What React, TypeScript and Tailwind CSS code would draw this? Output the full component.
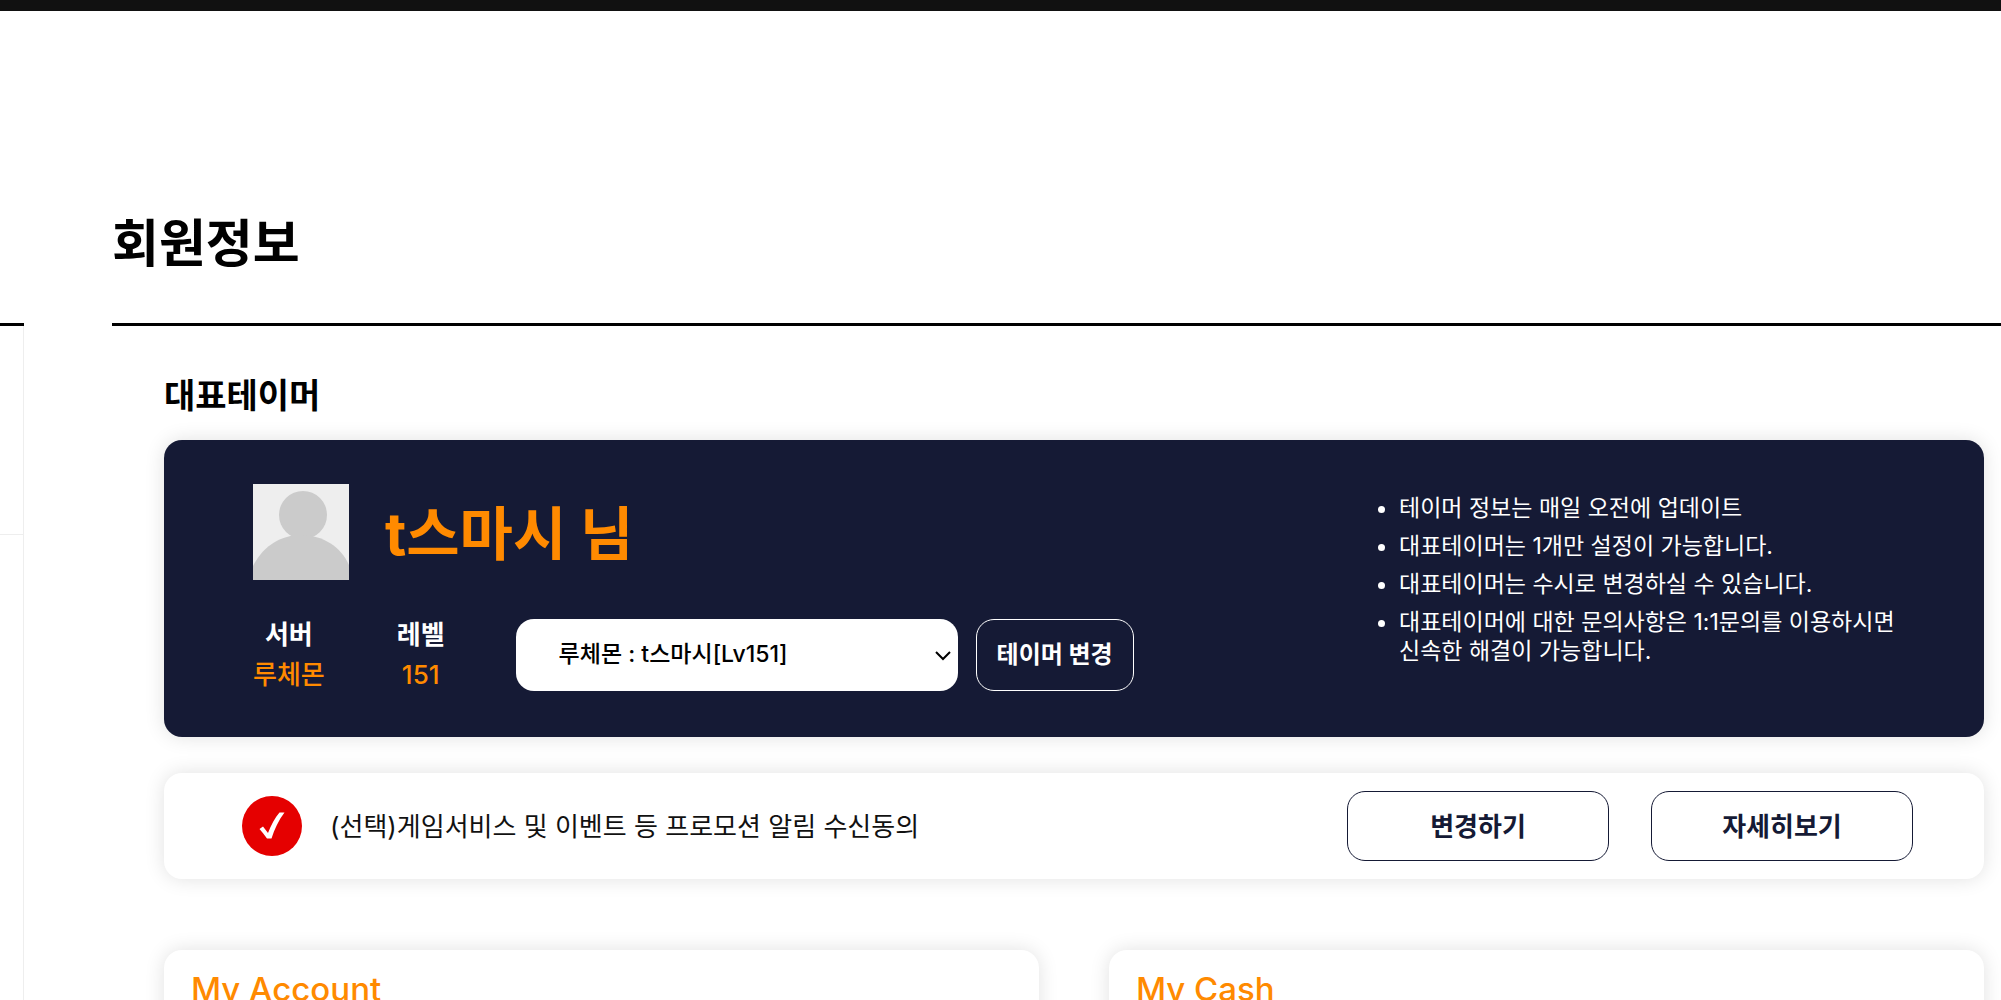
import React from 'react';

const NOTICES = [
  '테이머 정보는 매일 오전에 업데이트',
  '대표테이머는 1개만 설정이 가능합니다.',
  '대표테이머는 수시로 변경하실 수 있습니다.',
];

const SUMMARY_CARDS = ['My Account', 'My Cash'];

const Avatar: React.FC = () => (
  <svg viewBox="0 0 96 96" className="w-24 h-24 shrink-0" role="img" aria-label="프로필">
    <rect width="96" height="96" fill="#eeeeee" />
    <circle cx="50" cy="31" r="24" fill="#cbcbcb" />
    <path d="M0 82 C10 62 28 51 48 51 C70 51 88 63 96 81 V96 H0 Z" fill="#cbcbcb" />
  </svg>
);

const CheckBadge: React.FC = () => (
  <svg viewBox="0 0 60 60" className="w-[60px] h-[60px] shrink-0" aria-hidden="true">
    <circle cx="30" cy="30" r="30" fill="#e50000" />
    <path d="M17.5 33 L21 30.5 L26 37 C29 29 33 21.5 37.5 16.5 L42.5 16.5 C36.5 24.5 32.5 33 29.5 42.5 L25 42.5 C22.5 39 20 36 17.5 33 Z" fill="#ffffff" />
  </svg>
);

const Stat: React.FC<{ label: string; value: string }> = ({ label, value }) => (
  <div className="text-center">
    <dt className="font-bold text-white">{label}</dt>
    <dd className="font-medium text-[#ff8a00]">{value}</dd>
  </div>
);

const TamerCard: React.FC = () => (
  <section className="flex justify-between rounded-[18px] bg-[#151a35] pt-11 pb-[42px] pl-[89px] pr-[87px] shadow-[0_0_20px_rgba(0,0,0,0.12)]">
    <div>
      <div className="flex items-center gap-9">
        <Avatar />
        <p className="pt-1 text-[58px] leading-[72px] font-bold text-[#ff8a00]">t스마시 님</p>
      </div>
      <div className="mt-[34px] flex items-center">
        <dl className="flex gap-[72px] pt-px text-[26px] leading-10">
          <Stat label="서버" value="루체몬" />
          <Stat label="레벨" value="151" />
        </dl>
        <div className="relative ml-[71px] w-[442px]">
          <select
            aria-label="대표테이머 선택"
            className="h-[72px] w-full appearance-none rounded-[18px] bg-white pl-[43px] pr-10 text-[23px] font-medium text-black"
          >
            <option>루체몬 : t스마시[Lv151]</option>
          </select>
          <svg viewBox="0 0 16 10" className="pointer-events-none absolute right-[7px] top-8 h-[10px] w-4" fill="none" stroke="#000000" strokeWidth="2">
            <path d="M1 1 L8 8 L15 1" />
          </svg>
        </div>
        <button className="ml-[18px] h-[72px] w-[158px] rounded-[18px] border border-white text-[24px] font-bold text-white">
          테이머 변경
        </button>
      </div>
    </div>

    <ul className="mt-[10px] w-[522px] list-disc space-y-[9px] pl-6 text-[23px] leading-[29px] text-white">
      {NOTICES.map((text) => (
        <li key={text}>{text}</li>
      ))}
      <li>
        대표테이머에 대한 문의사항은 1:1문의를 이용하시면
        <br />
        신속한 해결이 가능합니다.
      </li>
    </ul>
  </section>
);

const ConsentCard: React.FC = () => (
  <section className="mt-9 flex h-[106px] items-center rounded-[18px] bg-white pl-[78px] pr-[71px] shadow-[0_0_20px_rgba(0,0,0,0.12)]">
    <CheckBadge />
    <p className="ml-7 flex-1 text-[26px] text-[#111111]">(선택)게임서비스 및 이벤트 등 프로모션 알림 수신동의</p>
    <div className="flex gap-[42px] text-[26px] font-bold text-[#151a35]">
      <button className="h-[70px] w-[262px] rounded-[18px] border border-[#151a35]">변경하기</button>
      <button className="h-[70px] w-[262px] rounded-[18px] border border-[#151a35]">자세히보기</button>
    </div>
  </section>
);

export default function App() {
  return (
    <div className="h-screen overflow-hidden bg-white font-[Inter,'Noto_Sans_CJK_KR',sans-serif] text-black">
      <div className="h-[11px] bg-[#111111]" />
      <div className="flex">
        {/* Edge of the side menu */}
        <aside className="mt-[312px] w-6 shrink-0 border-t-[3px] border-black">
          <div className="h-[209px] border-r border-b border-[#eeeeee]" />
          <div className="h-[600px] border-r border-[#eeeeee]" />
        </aside>

        <main className="ml-[88px] flex-1">
          <h1 className="mt-[195px] border-b-[3px] border-black pb-[42px] text-[51px] leading-[75px] font-bold">회원정보</h1>
          <div className="pl-[52px] pr-[17px]">
            <h2 className="mt-12 mb-[22px] text-[34px] leading-[44px] font-bold">대표테이머</h2>
            <TamerCard />
            <ConsentCard />
            <div className="mt-[71px] grid grid-cols-2 gap-[70px]">
              {SUMMARY_CARDS.map((title) => (
                <section key={title} className="h-[300px] rounded-[18px] bg-white px-[27px] pt-[18px] shadow-[0_0_20px_rgba(0,0,0,0.12)]">
                  <h3 className="text-[33px] leading-[42px] font-medium text-[#ff8a00]">{title}</h3>
                </section>
              ))}
            </div>
          </div>
        </main>
      </div>
    </div>
  );
}
